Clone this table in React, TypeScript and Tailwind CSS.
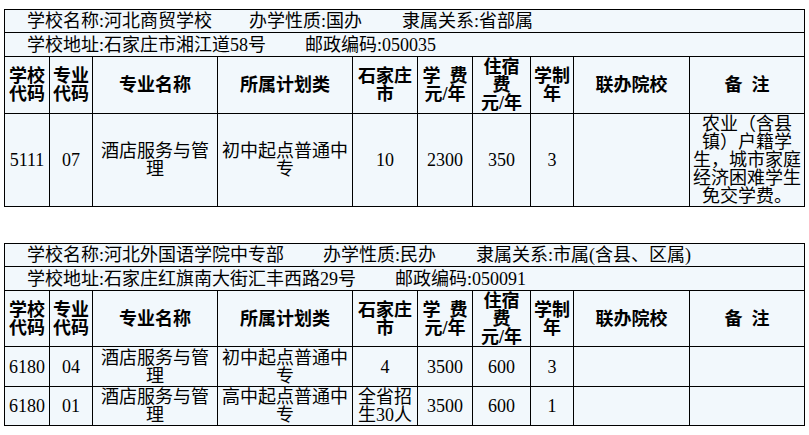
import React from "react";

type Row = {
  school: string;
  code: string;
  major: string;
  plan: React.ReactNode;
  quota: React.ReactNode;
  fee: string;
  dorm: string;
  years: string;
  joint: string;
  note: React.ReactNode;
  h: string;
};

type School = {
  name: string;
  nature: string;
  belong: string;
  address: string;
  zip: string;
  natureGap: string;
  belongGap: string;
  zipGap: string;
  rows: Row[];
};

const schools: School[] = [
  {
    name: "河北商贸学校",
    nature: "国办",
    belong: "省部属",
    address: "石家庄市湘江道58号",
    zip: "050035",
    natureGap: "ml-[37px]",
    belongGap: "ml-[40px]",
    zipGap: "ml-[39px]",
    rows: [
      {
        school: "5111",
        code: "07",
        major: "酒店服务与管理",
        plan: "初中起点普通中专",
        quota: "10",
        fee: "2300",
        dorm: "350",
        years: "3",
        joint: "",
        note: (
          <>
            农业（含县
            <br />
            镇）户籍学
            <br />
            生，城市家庭
            <br />
            经济困难学生
            <br />
            免交学费。
          </>
        ),
        h: "h-[93px]",
      },
    ],
  },
  {
    name: "河北外国语学院中专部",
    nature: "民办",
    belong: "市属(含县、区属)",
    address: "石家庄红旗南大街汇丰西路29号",
    zip: "050091",
    natureGap: "ml-[39px]",
    belongGap: "ml-[40px]",
    zipGap: "ml-[39px]",
    rows: [
      {
        school: "6180",
        code: "04",
        major: "酒店服务与管理",
        plan: "初中起点普通中专",
        quota: "4",
        fee: "3500",
        dorm: "600",
        years: "3",
        joint: "",
        note: "",
        h: "h-[40px]",
      },
      {
        school: "6180",
        code: "01",
        major: "酒店服务与管理",
        plan: "高中起点普通中专",
        quota: "全省招生30人",
        fee: "3500",
        dorm: "600",
        years: "1",
        joint: "",
        note: "",
        h: "h-[39px]",
      },
    ],
  },
];

const widths = [
  "w-[45px]",
  "w-[43px]",
  "w-[125px]",
  "w-[135px]",
  "w-[65px]",
  "w-[55px]",
  "w-[58px]",
  "w-[43px]",
  "w-[116px]",
  "w-[115px]",
];

const th = "border border-black px-[1px] text-center align-middle font-bold leading-[18px]";
const td = "border border-black px-[1px] text-center align-middle leading-[18px]";

const SchoolTable = ({ s, first }: { s: School; first: boolean }) => (
  <table
    className={`table-fixed border-collapse w-[800px] ml-[4px] bg-[#f2f8fc] text-[18px] text-black ${
      first ? "mt-[9px]" : "mt-[36px]"
    }`}
  >
    <colgroup>
      {widths.map((w, i) => (
        <col key={i} className={w} />
      ))}
    </colgroup>
    <tbody>
      <tr className="h-[23px]">
        <td colSpan={10} className="border border-black pl-[22px] leading-[20px] whitespace-nowrap">
          <span>学校名称:{s.name}</span>
          <span className={s.natureGap}>办学性质:{s.nature}</span>
          <span className={s.belongGap}>隶属关系:{s.belong}</span>
        </td>
      </tr>
      <tr className="h-[24px]">
        <td colSpan={10} className="border border-black pl-[22px] leading-[20px] whitespace-nowrap">
          <span>学校地址:{s.address}</span>
          <span className={s.zipGap}>邮政编码:{s.zip}</span>
        </td>
      </tr>
      <tr className={first ? "h-[57px]" : "h-[56px]"}>
        <th className={th}>
          学校
          <br />
          代码
        </th>
        <th className={th}>
          专业
          <br />
          代码
        </th>
        <th className={th}>专业名称</th>
        <th className={th}>所属计划类</th>
        <th className={th}>
          石家庄
          <br />市
        </th>
        <th className={th}>
          学&nbsp;&nbsp;费
          <br />
          元/年
        </th>
        <th className={`${th} leading-[17px]`}>
          住宿
          <br />费
          <br />
          元/年
        </th>
        <th className={th}>
          学制
          <br />年
        </th>
        <th className={th}>联办院校</th>
        <th className={th}>备&nbsp;&nbsp;注</th>
      </tr>
      {s.rows.map((r, i) => (
        <tr key={i} className={r.h}>
          <td className={td}>{r.school}</td>
          <td className={td}>{r.code}</td>
          <td className={td}>{r.major}</td>
          <td className={td}>{r.plan}</td>
          <td className={td}>{r.quota}</td>
          <td className={td}>{r.fee}</td>
          <td className={td}>{r.dorm}</td>
          <td className={td}>{r.years}</td>
          <td className={td}>{r.joint}</td>
          <td className={`${td} px-0`}>{r.note}</td>
        </tr>
      ))}
    </tbody>
  </table>
);

export default function App() {
  return (
    <div
      className="w-[809px] h-[435px] bg-white overflow-hidden"
      style={{ fontFamily: '"Liberation Serif", "Noto Sans CJK SC", serif' }}
    >
      {schools.map((s, i) => (
        <SchoolTable key={s.name} s={s} first={i === 0} />
      ))}
    </div>
  );
}
